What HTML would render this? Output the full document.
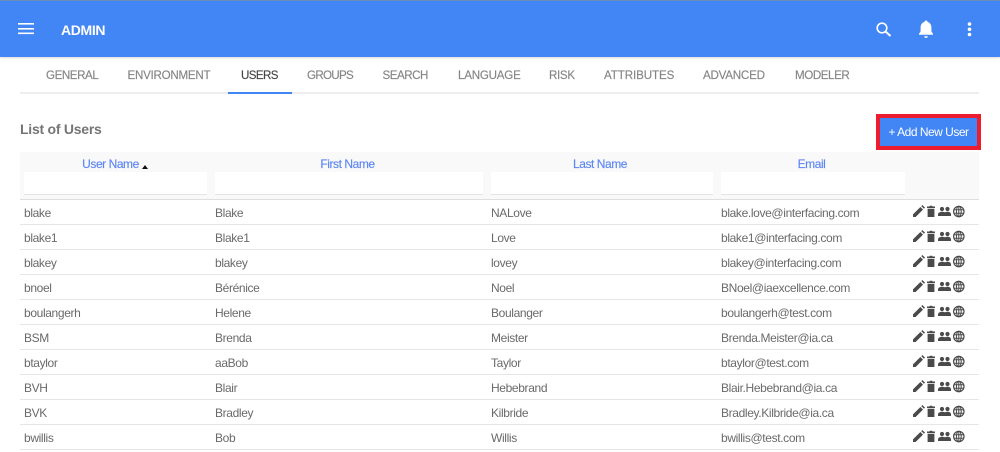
<!DOCTYPE html>
<html><head><meta charset="utf-8"><style>
html,body{margin:0;padding:0;background:#fff}
#p{position:relative;width:1000px;height:452px;overflow:hidden;font-family:"Liberation Sans",sans-serif;background:#fff}
#p div{position:absolute}
.t{top:69px;font-size:11.6px;line-height:14px;color:#858585;white-space:nowrap;-webkit-text-stroke:.15px #858585}
.h{top:157px;font-size:12px;line-height:14px;color:#5c86f5;white-space:nowrap;transform:translateX(-50%);letter-spacing:-.45px;-webkit-text-stroke:.15px #5c86f5}
.c{font-size:12px;line-height:14px;color:#6a6a6a;white-space:nowrap;letter-spacing:-.36px}
.l{left:20px;width:959px;height:1px;background:#e6e6e6}
.f{top:172px;height:22px;background:#fff;border-bottom:1px solid #e4e4e4}
.s{position:absolute;left:913px}
</style></head><body><div id="p">
<div style="left:0;top:0;width:1000px;height:57px;background:#4285f4;box-shadow:0 1px 2px rgba(0,0,0,.15)"></div>
<div style="left:0;top:0;width:1000px;height:1px;background:#6b8bb8"></div>
<svg style="position:absolute;left:0;top:0" width="1000" height="57" fill="#fff">
<rect x="18" y="23" width="16" height="1.6"/><rect x="18" y="28" width="16" height="1.6"/><rect x="18" y="32.5" width="16" height="1.6"/>
<circle cx="882" cy="28" r="4.8" fill="none" stroke="#fff" stroke-width="1.6"/><path d="M885.5 31.5L890.5 36" stroke="#fff" stroke-width="2" fill="none"/>
<path d="M926 20.5c.9 0 1.5.6 1.5 1.4 2.6.7 3.9 3 3.9 5.6v4l1.6 2.2v1h-14v-1l1.6-2.2v-4c0-2.6 1.3-4.9 3.9-5.6 0-.8.6-1.4 1.5-1.4z"/><path d="M924.2 36.3h3.6a1.8 1.6 0 0 1-3.6 0z"/>
<circle cx="969.5" cy="24" r="1.8"/><circle cx="969.5" cy="29.3" r="1.8"/><circle cx="969.5" cy="34.5" r="1.8"/>
</svg>
<div style="left:61px;top:22px;font-size:14px;line-height:16px;font-weight:bold;color:#fff;letter-spacing:-.35px">ADMIN</div>

<div class="t" style="left:46px;letter-spacing:-.44px">GENERAL</div>
<div class="t" style="left:127.5px;letter-spacing:-.26px">ENVIRONMENT</div>
<div class="t" style="left:241px;color:#444;-webkit-text-stroke:.15px #444;letter-spacing:-.6px">USERS</div>
<div class="t" style="left:307px;letter-spacing:-.7px">GROUPS</div>
<div class="t" style="left:382.5px;letter-spacing:-.48px">SEARCH</div>
<div class="t" style="left:458px;letter-spacing:-.23px">LANGUAGE</div>
<div class="t" style="left:549px;letter-spacing:-.33px">RISK</div>
<div class="t" style="left:604px;letter-spacing:-.1px">ATTRIBUTES</div>
<div class="t" style="left:703px;letter-spacing:-.23px">ADVANCED</div>
<div class="t" style="left:795px;letter-spacing:-.43px">MODELER</div>
<div style="left:20px;top:92px;width:959px;height:2px;background:#eeeeee"></div>
<div style="left:228px;top:92px;width:64px;height:2px;background:#4285f4"></div>

<div style="left:20px;top:120.5px;font-size:14px;line-height:16px;font-weight:bold;color:#757575;letter-spacing:-.25px">List of Users</div>
<div style="left:876px;top:114px;width:97px;height:28px;border:4px solid #ed1c2e;background:#4285f4;color:#fff;font-size:12px;line-height:29px;text-align:center;white-space:nowrap;letter-spacing:-.5px">+ Add New User</div>

<div style="left:20px;top:152px;width:959px;height:47px;background:#f9f9f9"></div>
<div class="h" style="left:110.5px">User Name</div>
<div style="left:142px;top:165px;width:0;height:0;border-left:3.5px solid transparent;border-right:3.5px solid transparent;border-bottom:4px solid #111"></div>
<div class="h" style="left:347.5px">First Name</div>
<div class="h" style="left:600px">Last Name</div>
<div class="h" style="left:811.5px">Email</div>
<div class="f" style="left:24px;width:183px"></div>
<div class="f" style="left:215px;width:268px"></div>
<div class="f" style="left:491px;width:222px"></div>
<div class="f" style="left:721px;width:184px"></div>
<div class="l" style="top:199px;background:#dedede"></div>

<svg width="0" height="0" style="position:absolute"><defs><g id="ic" fill="#4a4a4a">
<path d="M0 12V9.4L7.4 2l2.6 2.6L2.6 12zM8.3 1.1l1-1.1 2.7 2.6-1.1 1.1z"/>
<path d="M14 1.5h2.4l.5-.8h2.2l.5.8H22v1.5h-8zM14.6 3.8h6.8V12h-6.8z"/>
<circle cx="29" cy="4" r="2.1"/><circle cx="34.5" cy="4" r="2.1"/><path d="M25 11V9.3c0-1.7 2.4-2.6 4.2-2.6 1 0 2 .3 2.7.6.7-.3 1.6-.6 2.6-.6 1.8 0 3.5.9 3.5 2.6V11z"/>
<circle cx="45.8" cy="6.5" r="5.2" fill="none" stroke="#4a4a4a" stroke-width="1.2"/><ellipse cx="45.8" cy="6.5" rx="2.4" ry="5.2" fill="none" stroke="#4a4a4a" stroke-width="1"/><path d="M40.8 4.7h10M40.8 8.3h10M45.8 1.3v10.4" stroke="#4a4a4a" stroke-width="1" fill="none"/>
</g></defs></svg>

<div class="c" style="left:24px;top:206px">blake</div><div class="c" style="left:215px;top:206px">Blake</div><div class="c" style="left:491px;top:206px">NALove</div><div class="c" style="left:721px;top:206px">blake.love@interfacing.com</div><svg class="s" style="top:205px" width="54" height="13"><use href="#ic"/></svg><div class="l" style="top:224px"></div>
<div class="c" style="left:24px;top:231px">blake1</div><div class="c" style="left:215px;top:231px">Blake1</div><div class="c" style="left:491px;top:231px">Love</div><div class="c" style="left:721px;top:231px">blake1@interfacing.com</div><svg class="s" style="top:230px" width="54" height="13"><use href="#ic"/></svg><div class="l" style="top:249px"></div>
<div class="c" style="left:24px;top:256px">blakey</div><div class="c" style="left:215px;top:256px">blakey</div><div class="c" style="left:491px;top:256px">lovey</div><div class="c" style="left:721px;top:256px">blakey@interfacing.com</div><svg class="s" style="top:255px" width="54" height="13"><use href="#ic"/></svg><div class="l" style="top:274px"></div>
<div class="c" style="left:24px;top:281px">bnoel</div><div class="c" style="left:215px;top:281px">Bérénice</div><div class="c" style="left:491px;top:281px">Noel</div><div class="c" style="left:721px;top:281px">BNoel@iaexcellence.com</div><svg class="s" style="top:280px" width="54" height="13"><use href="#ic"/></svg><div class="l" style="top:299px"></div>
<div class="c" style="left:24px;top:306px">boulangerh</div><div class="c" style="left:215px;top:306px">Helene</div><div class="c" style="left:491px;top:306px">Boulanger</div><div class="c" style="left:721px;top:306px">boulangerh@test.com</div><svg class="s" style="top:305px" width="54" height="13"><use href="#ic"/></svg><div class="l" style="top:324px"></div>
<div class="c" style="left:24px;top:331px">BSM</div><div class="c" style="left:215px;top:331px">Brenda</div><div class="c" style="left:491px;top:331px">Meister</div><div class="c" style="left:721px;top:331px">Brenda.Meister@ia.ca</div><svg class="s" style="top:330px" width="54" height="13"><use href="#ic"/></svg><div class="l" style="top:349px"></div>
<div class="c" style="left:24px;top:356px">btaylor</div><div class="c" style="left:215px;top:356px">aaBob</div><div class="c" style="left:491px;top:356px">Taylor</div><div class="c" style="left:721px;top:356px">btaylor@test.com</div><svg class="s" style="top:355px" width="54" height="13"><use href="#ic"/></svg><div class="l" style="top:374px"></div>
<div class="c" style="left:24px;top:381px">BVH</div><div class="c" style="left:215px;top:381px">Blair</div><div class="c" style="left:491px;top:381px">Hebebrand</div><div class="c" style="left:721px;top:381px">Blair.Hebebrand@ia.ca</div><svg class="s" style="top:380px" width="54" height="13"><use href="#ic"/></svg><div class="l" style="top:399px"></div>
<div class="c" style="left:24px;top:406px">BVK</div><div class="c" style="left:215px;top:406px">Bradley</div><div class="c" style="left:491px;top:406px">Kilbride</div><div class="c" style="left:721px;top:406px">Bradley.Kilbride@ia.ca</div><svg class="s" style="top:405px" width="54" height="13"><use href="#ic"/></svg><div class="l" style="top:424px"></div>
<div class="c" style="left:24px;top:431px">bwillis</div><div class="c" style="left:215px;top:431px">Bob</div><div class="c" style="left:491px;top:431px">Willis</div><div class="c" style="left:721px;top:431px">bwillis@test.com</div><svg class="s" style="top:430px" width="54" height="13"><use href="#ic"/></svg><div class="l" style="top:449px"></div>
</div></body></html>
